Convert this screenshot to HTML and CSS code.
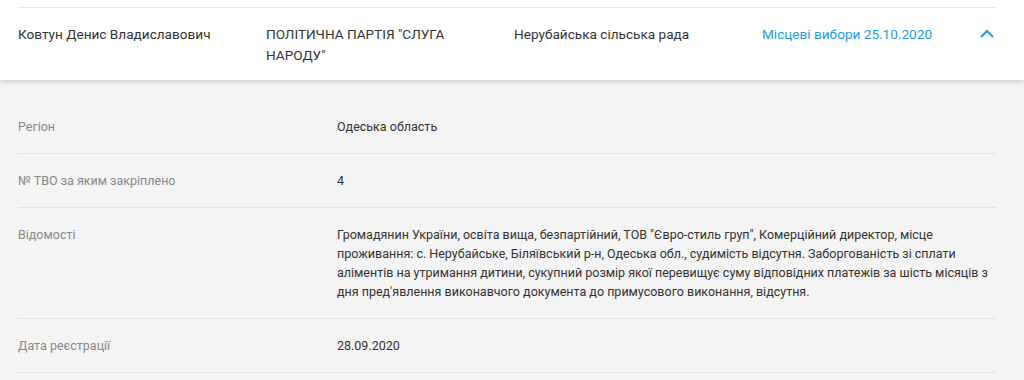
FILE: index.html
```html
<!DOCTYPE html>
<html lang="uk">
<head>
  <meta charset="UTF-8">
  <meta name="viewport" content="width=device-width, initial-scale=1.0">
  <title>Кандидат</title>
  <link rel="stylesheet" href="styles.css">
</head>
<body>
  <div class="candidate">
    <div class="candidate-head">
      <div class="head-row">
        <div>Ковтун Денис Владиславович</div>
        <div>ПОЛІТИЧНА ПАРТІЯ "СЛУГА НАРОДУ"</div>
        <div>Нерубайська сільська рада</div>
        <div class="election">Місцеві вибори 25.10.2020</div>
        <svg class="toggle" width="18" height="18" viewBox="0 0 18 18" aria-hidden="true">
          <path d="M3 12 L9 6 L15 12" fill="none" stroke="#1e9be6" stroke-width="2"/>
        </svg>
      </div>
    </div>
    <div class="candidate-body">
      <dl class="details">
        <div class="detail">
          <dt>Регіон</dt>
          <dd>Одеська область</dd>
        </div>
        <div class="detail">
          <dt>№ ТВО за яким закріплено</dt>
          <dd>4</dd>
        </div>
        <div class="detail">
          <dt>Відомості</dt>
          <dd>Громадянин України, освіта вища, безпартійний, ТОВ "Євро-стиль груп", Комерційний директор, місце проживання: с. Нерубайське, Біляївський р-н, Одеська обл., судимість відсутня. Заборгованість зі сплати аліментів на утримання дитини, сукупний розмір якої перевищує суму відповідних платежів за шість місяців з дня пред'явлення виконавчого документа до примусового виконання, відсутня.</dd>
        </div>
        <div class="detail">
          <dt>Дата реєстрації</dt>
          <dd>28.09.2020</dd>
        </div>
        <div class="detail"></div>
      </dl>
    </div>
  </div>
</body>
</html>
```

FILE: styles.css
```css
*, ::before, ::after {
  box-sizing: border-box;
}
body {
  margin: 0;
  font-family: Roboto, "Liberation Sans", sans-serif;
  font-size: 13.6px;
  color: #333;
  background: #f4f4f4;
}
.candidate-head {
  position: relative;
  z-index: 1;
  padding: 7px 28px 0 18px;
  background: #fff;
  box-shadow: 0 2px 4px rgba(0, 0, 0, .14);
}
.head-row {
  display: grid;
  grid-template-columns: 220px 220px 220px 1fr 18px;
  column-gap: 28px;
  padding: 16px 0 14px;
  line-height: 21px;
  border-top: 1px solid #e8e8e8;
}
.election {
  color: #1e9be6;
}
.toggle {
  display: block;
  margin-top: 1px;
}
.candidate-body {
  padding: 20px 28px 0 18px;
}
.details {
  margin: 0;
}
.detail {
  display: flex;
  padding: 17px 0;
  font-size: 12.5px;
  line-height: 19px;
  border-bottom: 1px solid #e3e3e3;
}
.detail dt {
  flex: 0 0 319px;
  color: #888;
}
.detail dd {
  flex: 1;
  margin: 0;
}
```
